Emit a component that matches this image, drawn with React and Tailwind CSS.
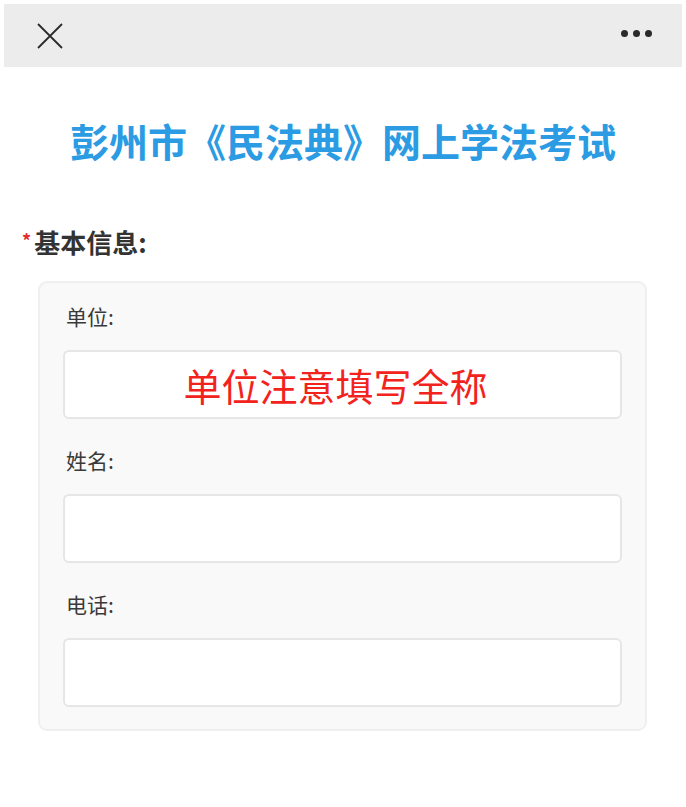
const font = { fontFamily: '"Noto Sans CJK SC", "Noto Sans", sans-serif' };

const Field = ({ label, first, children }) => (
  <div className={first ? '' : 'mt-[21px]'}>
    <div className="h-[40px] leading-[40px] pl-[3px] text-[21px] text-[#3a3a3a]">{label}</div>
    <div className="mt-[14px] h-[69px] rounded-[6px] border-2 border-[#e6e6e6] bg-white flex items-center justify-center pr-[14px]">
      {children}
    </div>
  </div>
);

const App = () => {
  return (
    <div className="w-[686px] h-[807px] bg-white" style={font}>
      {/* Top bar */}
      <div className="pt-[4px] px-[4px]">
        <div className="h-[63px] bg-[#ececec] flex items-center justify-between pl-[33px] pr-[30px]">
          <svg width="26" height="26" viewBox="0 0 26 26" className="text-[#2a2a2a]">
            <path d="M1 1 L25 25 M25 1 L1 25" stroke="currentColor" strokeWidth="1.8" fill="none" />
          </svg>
          <div className="flex items-center gap-[5px] -mt-[4px]">
            <span className="w-[7px] h-[7px] rounded-full bg-[#2a2a2a]" />
            <span className="w-[7px] h-[7px] rounded-full bg-[#2a2a2a]" />
            <span className="w-[7px] h-[7px] rounded-full bg-[#2a2a2a]" />
          </div>
        </div>
      </div>

      {/* Title */}
      <h1 className="mt-[48px] text-center text-[39px] leading-[50px] font-bold text-[#2b9be3]">
        彭州市《民法典》网上学法考试
      </h1>

      {/* Section */}
      <div className="mt-[60px] pl-[22px] flex items-center">
        <span className="text-[#e52b2b] text-[18px] font-bold mr-[3px] -mt-[4px]">*</span>
        <span className="text-[26px] leading-[34px] font-bold text-[#333]">基本信息:</span>
      </div>

      <div className="mt-[22px] mx-[38px] w-[609px] rounded-[9px] border-2 border-[#efefef] bg-[#f9f9f9] px-[23px] pt-[13px] pb-[22px]">
        <Field label="单位:" first>
          <span className="text-[38px] text-[#f2231c]">单位注意填写全称</span>
        </Field>
        <Field label="姓名:" />
        <Field label="电话:" />
      </div>
    </div>
  );
};

export default App;
